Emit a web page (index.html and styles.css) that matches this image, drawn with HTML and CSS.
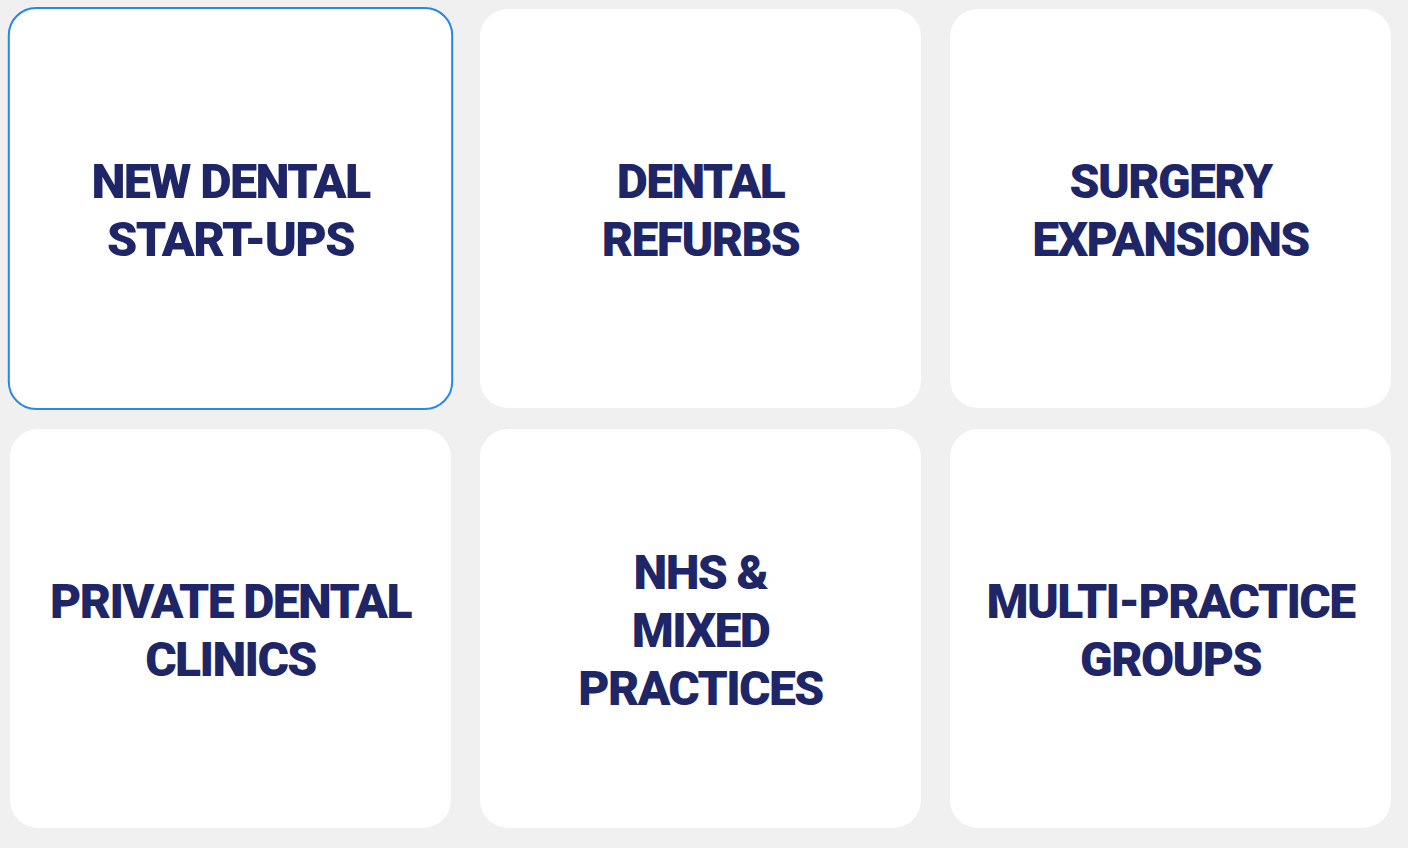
FILE: index.html
```html
<!DOCTYPE html>
<html lang="en">
<head>
<meta charset="utf-8">
<title>Who we work with</title>
<link rel="stylesheet" href="styles.css">
</head>
<body>
  <section class="sectors">
    <a class="sector is-active" href="#"><span class="sector-title">NEW DENTAL<br>START-UPS</span></a>
    <a class="sector" href="#"><span class="sector-title">DENTAL<br>REFURBS</span></a>
    <a class="sector" href="#"><span class="sector-title">SURGERY<br>EXPANSIONS</span></a>
    <a class="sector" href="#"><span class="sector-title">PRIVATE DENTAL<br>CLINICS</span></a>
    <a class="sector" href="#"><span class="sector-title">NHS &amp;<br>MIXED<br>PRACTICES</span></a>
    <a class="sector" href="#"><span class="sector-title">MULTI-PRACTICE<br>GROUPS</span></a>
  </section>
</body>
</html>
```
FILE: styles.css
```css
html, body {
  margin: 0;
  background: #f0f0f0;
}

body {
  width: 1408px;
  height: 848px;
  overflow: hidden;
}

.sectors {
  display: grid;
  grid-template-columns: repeat(3, 441px);
  grid-auto-rows: 399px;
  column-gap: 29px;
  row-gap: 21px;
  padding: 9px 0 0 10px;
}

.sector {
  display: flex;
  align-items: center;
  justify-content: center;
  padding-top: 5px;
  background: #ffffff;
  border-radius: 28px;
  text-decoration: none;
  text-align: center;
  box-sizing: border-box;
}

.sector.is-active {
  border: 2px solid #2688e8;
  transform: scale(1.01);
}

.sector-title {
  font-family: Roboto, "Liberation Sans", sans-serif;
  font-weight: 900;
  font-size: 48px;
  line-height: 58px;
  letter-spacing: -1.6px;
  color: #1e2667;
}
```
